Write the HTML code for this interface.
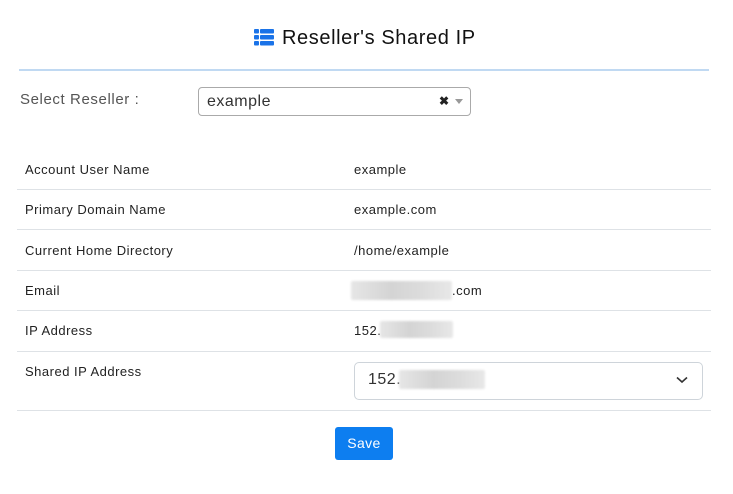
<!DOCTYPE html>
<html><head><style>
body{margin:0;width:733px;height:494px;background:#fff;font-family:"Liberation Sans",sans-serif;color:#222;position:relative;overflow:hidden}
.a{position:absolute}
.t{font-size:13px;line-height:16px;letter-spacing:0.5px}
.line{position:absolute;left:17px;width:694px;height:1px;background:#dee2e6}
.blur{position:absolute;background:linear-gradient(90deg,#e6e6e6,#d4d4d4 40%,#dcdcdc 70%,#e8e8e8);border-radius:2px;filter:blur(1px)}
</style></head><body>
<svg class="a" style="left:254px;top:29px" width="20" height="17" viewBox="0 0 20 17"><g fill="#1a73e8"><rect x="0" y="0" width="5" height="4.5" rx="1"/><rect x="6" y="0" width="14" height="4.5" rx="1"/><rect x="0" y="6" width="5" height="4.5" rx="1"/><rect x="6" y="6" width="14" height="4.5" rx="1"/><rect x="0" y="12" width="5" height="4.5" rx="1"/><rect x="6" y="12" width="14" height="4.5" rx="1"/></g></svg>
<div class="a" style="left:282px;top:26px;font-size:20px;line-height:24px;color:#111;letter-spacing:0.6px">Reseller's Shared IP</div>
<div class="a" style="left:19px;top:69px;width:690px;height:2px;background:#c0d9f2"></div>
<div class="a" style="left:20px;top:91px;font-size:15px;color:#555;letter-spacing:0.6px">Select Reseller :</div>
<div class="a" style="left:198px;top:87px;width:271px;height:27px;border:1px solid #aaa;border-radius:4px"></div>
<div class="a" style="left:207px;top:93px;font-size:16px;color:#333;letter-spacing:0.5px">example</div>
<div class="a" style="left:439px;top:94px;font-size:12px;font-weight:bold;color:#222">✖</div>
<div class="a" style="left:455px;top:99px;width:0;height:0;border-left:4px solid transparent;border-right:4px solid transparent;border-top:5px solid #999"></div>

<div class="a t" style="left:25px;top:162px">Account User Name</div><div class="a t" style="left:354px;top:162px">example</div>
<div class="line" style="top:189px"></div>
<div class="a t" style="left:25px;top:202px">Primary Domain Name</div><div class="a t" style="left:354px;top:202px">example.com</div>
<div class="line" style="top:229px"></div>
<div class="a t" style="left:25px;top:243px">Current Home Directory</div><div class="a t" style="left:354px;top:243px">/home/example</div>
<div class="line" style="top:270px"></div>
<div class="a t" style="left:25px;top:283px">Email</div>
<div class="blur" style="left:351px;top:281px;width:101px;height:19px"></div><div class="a t" style="left:452px;top:283px">.com</div>
<div class="line" style="top:310px"></div>
<div class="a t" style="left:25px;top:323px">IP Address</div>
<div class="a t" style="left:354px;top:323px">152.</div><div class="blur" style="left:380px;top:321px;width:73px;height:17px"></div>
<div class="line" style="top:351px"></div>
<div class="a t" style="left:25px;top:364px">Shared IP Address</div>
<div class="a" style="left:354px;top:362px;width:347px;height:36px;border:1px solid #ced4da;border-radius:5px"></div>
<div class="a" style="left:368px;top:371px;font-size:16px;color:#333;letter-spacing:0.5px">152.</div><div class="blur" style="left:399px;top:370px;width:86px;height:19px"></div>
<svg class="a" style="left:676px;top:376px" width="12" height="8" viewBox="0 0 12 8"><path d="M1 1.5 L6 6 L11 1.5" stroke="#333" stroke-width="1.6" fill="none"/></svg>
<div class="line" style="top:410px"></div>
<div class="a" style="left:335px;top:427px;width:58px;height:33px;background:#0d7ef0;border-radius:3px;color:#fff;font-size:14px;line-height:33px;text-align:center;letter-spacing:0.4px">Save</div>
</body></html>
